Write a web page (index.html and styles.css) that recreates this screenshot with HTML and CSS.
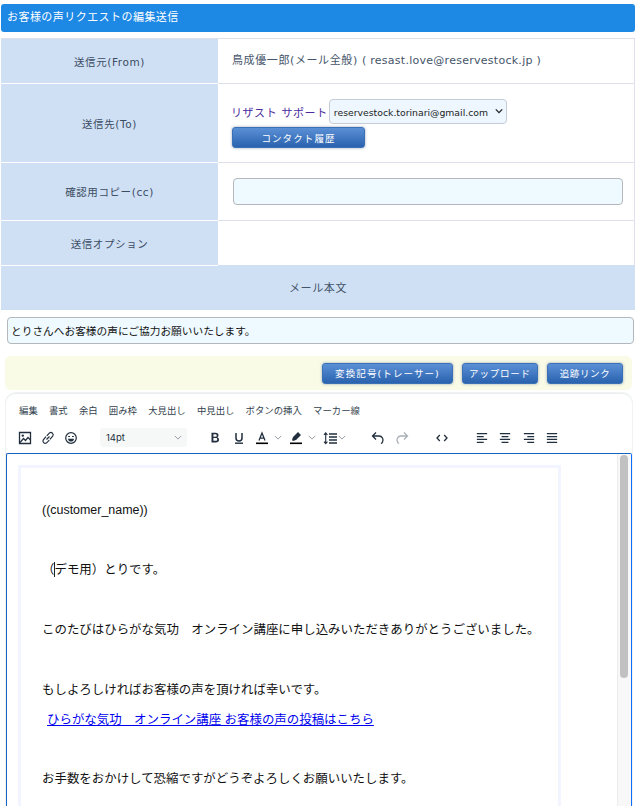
FILE: index.html
```html
<!DOCTYPE html>
<html lang="ja">
<head>
<meta charset="utf-8">
<title>お客様の声リクエストの編集送信</title>
<link rel="stylesheet" href="styles.css">
</head>
<body>
<div class="page">
  <h1 class="title">お客様の声リクエストの編集送信</h1>
  <div class="form">
    <div class="row row-from">
      <div class="label">送信元(From)</div>
      <div class="value from-text">鳥成優一郎(メール全般) <span class="mail">( resast.love@reservestock.jp )</span></div>
    </div>
    <div class="row row-to">
      <div class="label">送信先(To)</div>
      <div class="value to-value">
        <div class="to-line">
          <span class="to-name">リザスト サポート</span>
          <div class="select">reservestock.torinari@gmail.com
            <svg class="select-arrow" viewBox="0 0 10 6" width="8" height="6"><path d="M1 1l4 4 4-4" fill="none" stroke="#222" stroke-width="1.6"/></svg>
          </div>
        </div>
        <button class="btn btn-history">コンタクト履歴</button>
      </div>
    </div>
    <div class="row row-cc">
      <div class="label">確認用コピー(cc)</div>
      <div class="value cc-value"><input class="text-input cc-input" type="text"></div>
    </div>
    <div class="row row-opt">
      <div class="label">送信オプション</div>
      <div class="value"></div>
    </div>
    <div class="body-head">メール本文</div>
  </div>
  <div class="subject-wrap"><input class="text-input subject" type="text" value="とりさんへお客様の声にご協力お願いいたします。"></div>
  <div class="action-band">
    <button class="btn btn-tracer">変換記号(トレーサー)</button>
    <button class="btn btn-upload">アップロード</button>
    <button class="btn btn-track">追跡リンク</button>
  </div>
  <div class="editor">
    <div class="menubar">
      <span>編集</span><span>書式</span><span>余白</span><span>囲み枠</span><span>大見出し</span><span>中見出し</span><span>ボタンの挿入</span><span>マーカー線</span>
    </div>
    <div class="toolbar">
      <div class="tool-group group-insert">
        <svg class="icon" viewBox="0 0 14 14" width="14" height="14"><path d="M1.500 1.500h11v11h-11z" fill="none" stroke="#222f3e" stroke-width="1.300"/><path d="M2 11.500l3.500-4 2 2 2.500-3 2.500 2.500" fill="none" stroke="#222f3e" stroke-width="1.200"/><circle cx="4.800" cy="4.600" r="1.200" fill="#222f3e"/></svg>
        <svg class="icon" viewBox="0 0 14 14" width="14" height="14"><path d="M5.500 8.500l3-3M5 5.700L2.300 8.900a2.300 2.300 0 0 0 3.100 3.200l2.900-3M5.800 4.900l2.700-3a2.300 2.300 0 0 1 3.200 3.200L8.900 8.300" fill="none" stroke="#222f3e" stroke-width="1.200"/></svg>
        <svg class="icon" viewBox="0 0 14 14" width="14" height="14"><circle cx="7" cy="7" r="5.300" fill="none" stroke="#222f3e" stroke-width="1.200"/><path d="M4 7.800h6c-.3 2-1.500 2.800-3 2.800s-2.700-.8-3-2.800z" fill="#222f3e"/><path d="M4.200 5.500h1.800M8 5.500h1.800" stroke="#222f3e" stroke-width="1.100"/></svg>
      </div>
      <div class="font-size">14pt<svg viewBox="0 0 10 6" width="8" height="5"><path d="M1 1l4 4 4-4" fill="none" stroke="#8a929b" stroke-width="1.100"/></svg></div>
      <div class="tool-group group-format">
        <svg class="icon icon-b" viewBox="0 0 14 14" width="14" height="14"><path d="M3.500 1.800h4.200c1.800 0 2.800.9 2.800 2.400 0 1-.6 1.800-1.400 2.100 1.200.3 1.900 1.200 1.900 2.400 0 1.800-1.200 2.700-3.200 2.700H3.500zM5.400 3.300v2.400h2c.9 0 1.300-.4 1.300-1.200s-.4-1.200-1.300-1.200zm0 3.800v2.600h2.300c1 0 1.500-.4 1.500-1.300s-.5-1.300-1.500-1.300z" fill="#222f3e" fill-rule="evenodd"/></svg>
        <svg class="icon icon-u" viewBox="0 0 14 14" width="14" height="14"><path d="M4 2v5a3 3 0 0 0 6 0V2" fill="none" stroke="#222f3e" stroke-width="1.500"/><path d="M3 12.200h8" stroke="#222f3e" stroke-width="1.400"/></svg>
        <span class="split"><svg class="icon" viewBox="0 0 14 14" width="14" height="14"><path d="M4 9.500L7 2l3 7.500M5 7.200h4" fill="none" stroke="#222f3e" stroke-width="1.300"/><path d="M1 11.500h12v1.600H1z" fill="#000"/></svg><svg class="chev" viewBox="0 0 10 6" width="8" height="5"><path d="M1 1l4 4 4-4" fill="none" stroke="#8a929b" stroke-width="1.100"/></svg></span>
        <span class="split"><svg class="icon" viewBox="0 0 14 14" width="14" height="14"><path d="M3 9l1-3 5-5 3 3-5 5-3 1zM2 10.500h2" fill="#222f3e"/><path d="M1 11.500h12v1.600H1z" fill="#000"/></svg><svg class="chev" viewBox="0 0 10 6" width="8" height="5"><path d="M1 1l4 4 4-4" fill="none" stroke="#8a929b" stroke-width="1.100"/></svg></span>
        <span class="split split-tight"><svg class="icon" viewBox="0 0 14 14" width="14" height="14"><path d="M6 3h8M6 6h8M6 9h8M6 12h8" stroke="#222f3e" stroke-width="1.400"/><path d="M2.700 2v10.500M1 3.800l1.700-2 1.700 2M1 10.700l1.700 2 1.700-2" fill="none" stroke="#222f3e" stroke-width="1.100"/></svg><svg class="chev" viewBox="0 0 10 6" width="8" height="5"><path d="M1 1l4 4 4-4" fill="none" stroke="#8a929b" stroke-width="1.100"/></svg></span>
      </div>
      <div class="tool-group group-history">
        <svg class="icon" viewBox="0 0 14 14" width="14" height="14"><path d="M5 1.500L1.500 5 5 8.500M2 5h6a4 4 0 0 1 3.500 6 2.500 2.500 0 0 1-1.500 1.500" fill="none" stroke="#222f3e" stroke-width="1.300"/></svg>
        <svg class="icon" viewBox="0 0 14 14" width="14" height="14"><path d="M9 1.500L12.500 5 9 8.500M12 5H6a4 4 0 0 0-3.500 6 2.500 2.500 0 0 0 1.500 1.500" fill="none" stroke="#aab0b6" stroke-width="1.300"/></svg>
      </div>
      <div class="tool-group group-code">
        <svg class="icon" viewBox="0 0 14 14" width="14" height="14"><path d="M4.800 4L2 7l2.800 3M9.200 4L12 7l-2.800 3" fill="none" stroke="#222f3e" stroke-width="1.300"/></svg>
      </div>
      <div class="tool-group group-align">
        <svg class="icon" viewBox="0 0 14 14" width="12" height="12"><path d="M1 2h12M1 5.300h8M1 8.600h12M1 12h8" stroke="#222f3e" stroke-width="1.500"/></svg>
        <svg class="icon" viewBox="0 0 14 14" width="12" height="12"><path d="M1 2h12M3 5.300h8M1 8.600h12M3 12h8" stroke="#222f3e" stroke-width="1.500"/></svg>
        <svg class="icon" viewBox="0 0 14 14" width="12" height="12"><path d="M1 2h12M5 5.300h8M1 8.600h12M5 12h8" stroke="#222f3e" stroke-width="1.500"/></svg>
        <svg class="icon" viewBox="0 0 14 14" width="12" height="12"><path d="M1 2h12M1 5.300h12M1 8.600h12M1 12h12" stroke="#222f3e" stroke-width="1.500"/></svg>
      </div>
    </div>
    <div class="edit-area">
      <div class="doc">
        <p class="first">((customer_name))</p>
        <p class="gap"><span class="caret"></span>（デモ用）とりです。</p>
        <p class="gap">このたびはひらがな気功　オンライン講座に申し込みいただきありがとうございました。</p>
        <p class="gap">もしよろしければお客様の声を頂ければ幸いです。</p>
        <p class="link-line"><a href="#">ひらがな気功　オンライン講座 お客様の声の投稿はこちら</a></p>
        <p class="gap gap-last">お手数をおかけして恐縮ですがどうぞよろしくお願いいたします。</p>
      </div>
      <div class="scrollbar"><div class="thumb"></div></div>
    </div>
  </div>
</div>
</body>
</html>
```
FILE: styles.css
```css
* { box-sizing: border-box; }
html, body { margin: 0; padding: 0; background: #fff; }
body {
  width: 635px;
  height: 806px;
  overflow: hidden;
  font-family: "DejaVu Sans", "Noto Sans CJK JP", sans-serif;
  color: #3c4c62;
}
.page { padding-top: 4px; }
.title {
  margin: 0 0 6px 1px;
  height: 28px;
  padding-left: 6px;
  background: #1e88e5;
  border-radius: 3px;
  color: #fff;
  font-size: 11px;
  font-weight: 400;
  line-height: 28px;
  letter-spacing: 0.45px;
}
.form { margin-left: 1px; border-top: 1px solid #e0e0ec; border-right: 1px solid #e0e0ec; }
.row { display: flex; border-bottom: 1px solid #e0e0ec; }
.label {
  width: 217px;
  flex: none;
  display: flex;
  align-items: center;
  justify-content: center;
  background: #cfe0f5;
  color: #3c4c62;
  font-size: 10.5px;
  letter-spacing: 0.6px;
  box-shadow: 0 1px 0 #fff;
}
.value { flex: 1; min-width: 0; }
.row-from { height: 45px; }
.row-to { height: 79px; }
.row-cc { height: 58px; padding-top: 0; }
.row-opt { height: 44px; border-bottom: 0; }
.from-text {
  padding: 15px 0 0 14px;
  font-size: 11px;
  letter-spacing: 0.6px;
  line-height: 14px;
  color: #45556a;
}
.mail { letter-spacing: 0.27px; }
.to-value { padding: 15px 0 0 14px; }
.to-line { display: flex; align-items: center; gap: 1px; height: 25px; }
.to-name { margin-left: -1px; font-size: 11px; letter-spacing: 0.6px; color: #4a2a9c; }
.select {
  width: 178px;
  height: 25px;
  padding: 0 0 0 4px;
  border: 1px solid #c4ccd6;
  border-radius: 4px;
  background: #eef7ff;
  color: #222;
  font-size: 9.3px;
  line-height: 26px;
  position: relative;
  white-space: nowrap;
}
.select-arrow { position: absolute; right: 3px; top: 8px; }
.btn {
  display: block;
  padding: 0;
  border: 1px solid #3a70b5;
  border-radius: 3px;
  background: linear-gradient(#5b90d6, #2a62ae);
  box-shadow: 0 0 3px rgba(90, 110, 140, .6);
  color: #fff;
  font-family: "DejaVu Sans", "Noto Sans CJK JP", sans-serif;
  font-size: 9.5px;
  letter-spacing: 1.1px;
  height: 21px;
  text-align: center;
}
.btn-history { width: 133px; margin-top: 3px; }
.cc-value { padding: 15px 0 0 15px; }
.text-input {
  display: block;
  border: 1px solid #b4b8bc;
  border-radius: 4px;
  background: #eefaff;
  font-family: "DejaVu Sans", "Noto Sans CJK JP", sans-serif;
  outline: 0;
}
.cc-input { width: 390px; height: 27px; }
.body-head {
  height: 45px;
  margin-right: -1px;
  background: #cfe0f5;
  color: #45556a;
  text-align: center;
  font-size: 11px;
  letter-spacing: 0.6px;
  line-height: 48px;
}
.subject-wrap { padding: 7px 1px 0 7px; }
.subject { width: 627px; height: 27px; padding: 0 3px; font-size: 10.7px; color: #111; }
.action-band {
  display: flex;
  justify-content: flex-end;
  gap: 9px;
  align-items: center;
  height: 34px;
  margin: 12px 3px 0 5px;
  padding: 0 9px 0 0;
  border-radius: 6px;
  background: #f9fbe7;
}
.btn-tracer { width: 131px; }
.btn-upload { width: 76px; letter-spacing: 0.8px; }
.btn-track { width: 76px; letter-spacing: 0.6px; }
.editor {
  margin: 3px 3px 0 6px;
  border-top: 1px solid #eceeef;
  border-radius: 10px 10px 0 0;
  box-shadow: 0 0 0 1px #f1f2f3;
}
.menubar {
  display: flex;
  gap: 11.2px;
  height: 31px;
  padding: 9px 0 0 13px;
  font-family: "Inter", "Noto Sans CJK JP", sans-serif;
  font-size: 9.4px;
  line-height: 16px;
  color: #333f4e;
}
.toolbar { display: flex; align-items: center; height: 25px; padding-left: 12px; }
.tool-group { display: flex; align-items: center; }
.group-insert { gap: 9px; width: 82px; }
.font-size {
  width: 87px;
  height: 19px;
  margin-right: 21px;
  padding: 0 5px 0 6px;
  display: flex;
  align-items: center;
  justify-content: space-between;
  background: #f6f7f7;
  border-radius: 3px;
  font-family: "Inter", sans-serif;
  font-size: 9.500px;
  color: #222f3e;
}
.group-format { gap: 7px; width: 163px; }
.icon-b { margin-right: 3px; }
.icon-u { margin-right: 2px; }
.split { display: flex; align-items: center; gap: 5px; }
.split-tight { gap: 1px; }
.group-history { gap: 10px; width: 64px; }
.group-code { width: 41px; }
.group-align { gap: 11.300px; }
.edit-area {
  position: relative;
  height: 360px;
  margin-top: 3px;
  border: 1.500px solid #1565c0;
  border-right-color: #0d6efd;
  border-bottom: 0;
  border-radius: 2px 2px 0 0;
  overflow: hidden;
}
.doc {
  width: 543px;
  margin: 11px 0 0 11px;
  height: 400px;
  padding: 33px 21px 0;
  border: 3px solid #f2f5ff;
  border-bottom: 0;
  font-family: "Liberation Sans", "Noto Sans CJK JP", sans-serif;
  font-size: 12.45px;
  color: #111;
  line-height: 18px;
}
.doc p { margin: 0; white-space: nowrap; position: relative; }
.doc .gap { margin-top: 42px; }
.doc .gap-last { margin-top: 41px; }
.doc .link-line { margin-top: 12px; padding-left: 5px; }
.doc a { color: #0000ee; text-decoration: underline; }
.caret {
  position: absolute;
  left: 11.500px;
  top: 1px;
  width: 1px;
  height: 15px;
  background: #222;
}
.scrollbar {
  position: absolute;
  top: 0;
  right: 0;
  bottom: 0;
  width: 14px;
  background: #f8f8f8;
  border-left: 1px solid #ececec;
}
.thumb {
  width: 8px;
  height: 223px;
  margin: 1px 0 0 2px;
  border-radius: 4px;
  background: #c1c1c1;
}
```
